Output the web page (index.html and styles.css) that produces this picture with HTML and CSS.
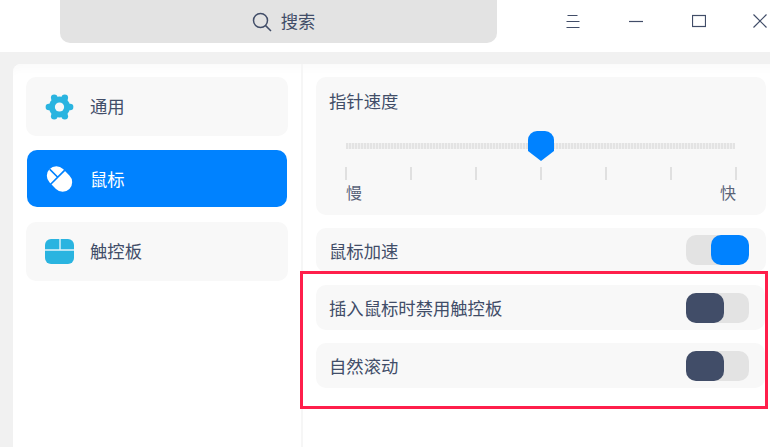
FILE: index.html
```html
<!DOCTYPE html>
<html lang="zh-CN">
<head>
<meta charset="UTF-8">
<meta name="viewport" content="width=device-width, initial-scale=1.0">
<title>鼠标设置</title>
<link rel="stylesheet" href="styles.css">
</head>
<body>

<header class="titlebar">
  <div class="search">
    <svg class="search-icon" width="20" height="20" viewBox="0 0 20 20"><circle cx="8.5" cy="8.5" r="7"/><path d="M13.6 13.6 19 19"/></svg>
    <span>搜索</span>
  </div>
  <div class="window-controls">
    <svg width="14" height="14" viewBox="0 0 14 14"><path d="M1.5 1.5h10M0.5 7.5h13M0.5 13.5h13"/></svg>
    <svg width="14" height="14" viewBox="0 0 14 14"><path d="M0 7.5h14"/></svg>
    <svg width="14" height="14" viewBox="0 0 14 14"><rect x="0.5" y="1.5" width="13" height="11"/></svg>
    <svg class="close" width="14" height="14" viewBox="0 0 14 14"><path d="M0.5 0.5l13 13M13.5 0.5l-13 13"/></svg>
  </div>
</header>

<div class="shell">
  <main class="panel">
    <nav class="sidebar">
      <div class="nav-item">
        <svg width="29" height="26" viewBox="-1 -0.5 30 27">
          <g fill="#2ab4e0">
            <circle cx="14" cy="13" r="11"/>
            <circle cx="8.5" cy="3.4" r="3.4"/><circle cx="19.5" cy="3.4" r="3.4"/>
            <circle cx="3" cy="13" r="3.4"/><circle cx="25" cy="13" r="3.4"/>
            <circle cx="8.5" cy="22.6" r="3.4"/><circle cx="19.5" cy="22.6" r="3.4"/>
          </g>
          <circle cx="14" cy="13" r="4.8" fill="#f8f8f8"/>
        </svg>
        <span>通用</span>
      </div>
      <div class="nav-item active">
        <svg width="29" height="28" viewBox="0 0 28 28">
          <g transform="rotate(-45 14 14)">
            <rect x="4.5" y="0" width="19" height="28" rx="9.5" fill="#fff"/>
            <path d="M4 11.5h20M14 0v11.5" stroke="#0082ff" stroke-width="1.6" fill="none"/>
          </g>
        </svg>
        <span>鼠标</span>
      </div>
      <div class="nav-item">
        <svg width="29" height="25" viewBox="0 0 29 25">
          <rect width="29" height="25" rx="6" fill="#2ab4e0"/>
          <path d="M0 11h29M15 0v11" stroke="#e4f4fa" stroke-width="1.4" fill="none"/>
        </svg>
        <span>触控板</span>
      </div>
    </nav>

    <section class="settings">
      <div class="card speed">
        <div class="card-title">指针速度</div>
        <div class="slider">
          <div class="track"></div>
          <svg class="thumb" width="26" height="30" viewBox="0 0 26 30"><path d="M9 0h8a9 9 0 0 1 9 9v11L13 30 0 20V9a9 9 0 0 1 9-9z" fill="#0082ff"/></svg>
        </div>
        <div class="ticks"><i></i><i></i><i></i><i></i><i></i><i></i><i></i></div>
        <div class="scale-labels"><span>慢</span><span>快</span></div>
      </div>

      <div class="card row accel">
        <span>鼠标加速</span>
        <div class="toggle on"><div class="knob"></div></div>
      </div>

      <div class="highlight">
        <div class="card row">
          <span>插入鼠标时禁用触控板</span>
          <div class="toggle"><div class="knob"></div></div>
        </div>
        <div class="card row">
          <span>自然滚动</span>
          <div class="toggle"><div class="knob"></div></div>
        </div>
      </div>
    </section>
  </main>
</div>

</body>
</html>
```

FILE: styles.css
```css
html, body {
  height: 100%;
}
body {
  margin: 0;
  background: #fff;
  color: #414d68;
  font-family: "Noto Sans CJK SC", "Noto Sans", sans-serif;
  font-size: 17.33px;
  overflow: hidden;
  display: flex;
  flex-direction: column;
}
.titlebar {
  height: 52px;
  flex-shrink: 0;
  display: flex;
  align-items: flex-start;
  padding-left: 60px;
}
.search {
  width: 437px;
  height: 43px;
  box-sizing: border-box;
  padding-left: 10px;
  background: #e3e3e3;
  border-radius: 0 0 10px 10px;
  display: flex;
  align-items: center;
  justify-content: center;
  gap: 9px;
}
.search span {
  margin-top: -3px;
}
.search-icon {
  fill: none;
  stroke: #414d68;
  stroke-width: 1.5;
}
.window-controls {
  display: flex;
  gap: 49px;
  margin: 14px 0 0 69px;
}
.window-controls svg {
  fill: none;
  stroke: #414d68;
  stroke-width: 1.2;
  flex-shrink: 0;
}
.window-controls .close {
  margin-left: -2px;
}

.shell {
  flex: 1;
  background: #f1f1f1;
  padding: 12px 0 0 13px;
  min-height: 0;
}
.panel {
  height: 100%;
  background: #fff;
  border-top-left-radius: 8px;
  display: flex;
  box-shadow: inset 0 13px 8px -8px #fbfbfb;
}
.sidebar {
  width: 262px;
  flex-shrink: 0;
  padding: 13px 13px 0;
  border-right: 2px solid #f6f6f6;
  display: flex;
  flex-direction: column;
  gap: 14px;
}
.nav-item {
  height: 59px;
  background: #f8f8f8;
  border-radius: 10px;
  display: flex;
  align-items: center;
  gap: 16px;
  padding-left: 19px;
}
.nav-item svg {
  flex-shrink: 0;
}
.nav-item span {
  margin-top: -2px;
}
.nav-item.active {
  height: 57px;
  margin: 0 1px 1px;
  padding-left: 18px;
  background: #0082ff;
  color: #fff;
}
.nav-item.active span {
  margin-top: 0;
}

.settings {
  width: 450px;
  flex-shrink: 0;
  padding: 13px 0 0 13px;
}
.card {
  background: #f8f8f8;
  border-radius: 10px;
}
.row {
  display: flex;
  align-items: center;
  justify-content: space-between;
  height: 45px;
  padding: 0 17px 0 13px;
}
.accel {
  height: 44px;
  margin-top: 13px;
}
.speed {
  height: 138px;
  box-sizing: border-box;
  padding: 11px 13px 0;
}
.card-title {
  line-height: 26px;
}
.slider {
  position: relative;
  height: 30px;
  margin: 17px 17px 0;
  display: flex;
  align-items: center;
}
.track {
  width: 389px;
  height: 6px;
  background: repeating-linear-gradient(90deg, #e3e3e3 0 2px, #f0f0f0 2px 3px);
}
.thumb {
  position: absolute;
  left: 182px;
  top: 0;
}
.ticks {
  display: flex;
  justify-content: space-between;
  width: 392px;
  margin: 6px 0 0 16px;
}
.ticks i {
  width: 2px;
  height: 13px;
  background: #e0e0e0;
}
.scale-labels {
  display: flex;
  justify-content: space-between;
  width: 390px;
  margin: 0 0 0 17px;
  font-size: 16px;
  line-height: 24px;
  color: #5a6478;
}
.toggle {
  width: 63px;
  height: 30px;
  background: #e3e3e3;
  border-radius: 10px;
  display: flex;
}
.knob {
  width: 38px;
  height: 30px;
  background: #414d68;
  border-radius: 10px;
}
.toggle.on {
  justify-content: flex-end;
}
.toggle.on .knob {
  background: #0082ff;
}
.highlight {
  box-sizing: border-box;
  margin: -1px -2px 0 -16px;
  border: 3px solid #ff1f4b;
  height: 138px;
  padding: 11px 0 0 13px;
  display: flex;
  flex-direction: column;
  gap: 13px;
}
.highlight .row {
  padding-right: 16px;
}
```
